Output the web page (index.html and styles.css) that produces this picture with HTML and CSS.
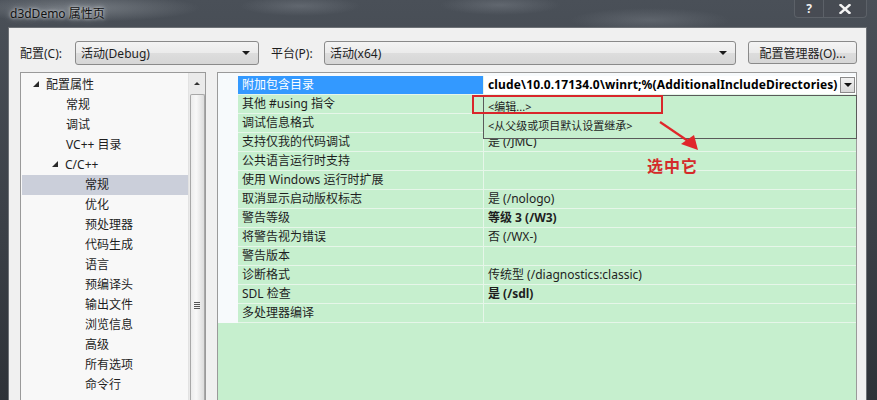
FILE: index.html
```html
<!DOCTYPE html>
<html lang="zh">
<head>
<meta charset="utf-8">
<title>d3dDemo 属性页</title>
<link rel="stylesheet" href="styles.css">
</head>
<body>
<div class="window">
  <div class="titlebar">
    <span class="title">d3dDemo 属性页</span>
    <div class="caption-btns">
      <div class="cbtn help">?</div>
      <div class="cbtn close">
        <svg width="12" height="10" viewBox="0 0 12 10"><path d="M1.5 1 L10.5 9 M10.5 1 L1.5 9" stroke="#f4f4f4" stroke-width="2.4" stroke-linecap="square"/></svg>
      </div>
    </div>
  </div>
  <div class="frame">
    <div class="dialog">
      <div class="toolbar">
        <span class="label">配置(C):</span>
        <div class="combo combo-config"><span>活动(Debug)</span><i class="arrow"></i></div>
        <span class="label label-plat">平台(P):</span>
        <div class="combo combo-plat"><span>活动(x64)</span><i class="arrow"></i></div>
        <div class="button">配置管理器(O)...</div>
      </div>
      <div class="main">
        <div class="tree">
          <div class="tree-items">
            <div class="ti l0"><i class="tri"></i>配置属性</div>
            <div class="ti l1">常规</div>
            <div class="ti l1">调试</div>
            <div class="ti l1">VC++ 目录</div>
            <div class="ti l1b"><i class="tri"></i>C/C++</div>
            <div class="ti l2 sel">常规</div>
            <div class="ti l2">优化</div>
            <div class="ti l2">预处理器</div>
            <div class="ti l2">代码生成</div>
            <div class="ti l2">语言</div>
            <div class="ti l2">预编译头</div>
            <div class="ti l2">输出文件</div>
            <div class="ti l2">浏览信息</div>
            <div class="ti l2">高级</div>
            <div class="ti l2">所有选项</div>
            <div class="ti l2">命令行</div>
          </div>
          <div class="vscroll">
            <div class="sb-up"><i></i></div>
            <div class="sb-thumb"><span class="grip"></span></div>
          </div>
        </div>
        <div class="grid">
          <div class="rows">
            <div class="row selrow"><div class="name">附加包含目录</div><div class="val edit"><span class="edit-text">clude\10.0.17134.0\winrt;%(AdditionalIncludeDirectories)</span><span class="dd"><i></i></span></div></div>
            <div class="row"><div class="name">其他 #using 指令</div><div class="val"></div></div>
            <div class="row"><div class="name">调试信息格式</div><div class="val"></div></div>
            <div class="row"><div class="name">支持仅我的代码调试</div><div class="val">是 (/JMC)</div></div>
            <div class="row"><div class="name">公共语言运行时支持</div><div class="val"></div></div>
            <div class="row"><div class="name">使用 Windows 运行时扩展</div><div class="val"></div></div>
            <div class="row"><div class="name">取消显示启动版权标志</div><div class="val">是 (/nologo)</div></div>
            <div class="row"><div class="name">警告等级</div><div class="val b">等级 3 (/W3)</div></div>
            <div class="row"><div class="name">将警告视为错误</div><div class="val">否 (/WX-)</div></div>
            <div class="row"><div class="name">警告版本</div><div class="val"></div></div>
            <div class="row"><div class="name">诊断格式</div><div class="val">传统型 (/diagnostics:classic)</div></div>
            <div class="row"><div class="name">SDL 检查</div><div class="val b">是 (/sdl)</div></div>
            <div class="row"><div class="name">多处理器编译</div><div class="val"></div></div>
          </div>
          <div class="popup">
            <div class="pi">&lt;编辑...&gt;</div>
            <div class="pi">&lt;从父级或项目默认设置继承&gt;</div>
          </div>
          <div class="redbox"></div>
          <svg class="redarrow" width="44" height="34" viewBox="0 0 44 34"><path d="M2 2 L30 21" stroke="#e0262a" stroke-width="2.2"/><path d="M23 24 L36 15 L40 30 Z" fill="#e0262a"/></svg>
          <div class="note">选中它</div>
        </div>
      </div>
    </div>
  </div>
</div>
</body>
</html>
```
FILE: styles.css
```css
html, body {
  margin: 0;
  padding: 0;
}
body {
  width: 877px;
  height: 400px;
  overflow: hidden;
  font-family: "Noto Sans", "Noto Sans CJK SC", sans-serif;
  font-size: 12px;
  color: #1e1e1e;
  background: #2c3036;
}
.window {
  width: 877px;
  height: 400px;
  display: flex;
  flex-direction: column;
  background:
    radial-gradient(ellipse 120px 14px at 80px 8px, rgba(150,156,162,0.55), transparent),
    radial-gradient(ellipse 60px 10px at 300px 6px, rgba(120,126,134,0.5), transparent),
    radial-gradient(ellipse 60px 10px at 500px 5px, rgba(120,126,134,0.5), transparent),
    radial-gradient(ellipse 80px 12px at 650px 20px, rgba(120,126,134,0.45), transparent),
    linear-gradient(180deg, #4a5058 0%, #3a3f46 60%, #2e3238 100%);
}
.titlebar {
  height: 27px;
  display: flex;
  align-items: flex-start;
  justify-content: space-between;
  flex: none;
}
.title {
  margin: 4px 0 0 10px;
  font-size: 12px;
  color: #121212;
  text-shadow: 0 0 6px rgba(220,224,228,0.9), 0 0 3px rgba(220,224,228,0.9);
}
.caption-btns {
  display: flex;
  margin-right: 10px;
  height: 17px;
  border: 1px solid #5c6168;
  border-top: none;
  border-radius: 0 0 4px 4px;
  background: rgba(70,74,80,0.6);
}
.cbtn {
  display: flex;
  align-items: center;
  justify-content: center;
  color: #f0f0f0;
  font-weight: bold;
  font-size: 12px;
}
.cbtn.help {
  width: 28px;
  border-right: 1px solid #5c6168;
}
.cbtn.close {
  width: 42px;
}
.frame {
  flex: 1;
  display: flex;
  padding: 0 10px 0 8px;
  min-height: 0;
}
.dialog {
  flex: 1;
  background: #f0f0f0;
  border: 1px solid #6d7176;
  border-bottom: none;
  display: flex;
  flex-direction: column;
  min-height: 0;
}
.toolbar {
  display: flex;
  align-items: center;
  height: 25px;
  margin-top: 12px;
  padding-left: 11px;
}
.label {
  width: 55px;
  flex: none;
}
.label-plat {
  margin-left: 12px;
  width: 53px;
}
.combo {
  height: 22px;
  border: 1px solid #8a8a8a;
  border-radius: 3px;
  background: linear-gradient(180deg, #f4f4f4 0%, #ebebeb 50%, #dddddd 51%, #d6d6d6 100%);
  display: flex;
  align-items: center;
  justify-content: space-between;
  padding: 0 8px 0 5px;
  box-sizing: border-box;
  flex: none;
}
.combo-config { width: 184px; height: 24px; }
.combo-plat { width: 412px; height: 24px; }
.arrow {
  width: 0;
  height: 0;
  border-left: 4px solid transparent;
  border-right: 4px solid transparent;
  border-top: 4px solid #1a1a1a;
}
.button {
  margin-left: 12px;
  width: 109px;
  height: 23px;
  box-sizing: border-box;
  border: 1px solid #8a8a8a;
  border-radius: 3px;
  background: linear-gradient(180deg, #f4f4f4 0%, #ebebeb 50%, #dddddd 51%, #d6d6d6 100%);
  display: flex;
  align-items: center;
  justify-content: center;
}
.main {
  flex: 1;
  display: flex;
  margin-top: 7px;
  padding-left: 11px;
  min-height: 0;
}
.tree {
  width: 186px;
  box-sizing: border-box;
  border: 1px solid #9a9a9a;
  border-bottom: none;
  background: #f8f8f8;
  display: flex;
  flex: none;
}
.tree-items {
  flex: 1;
  padding-top: 2px;
  padding-left: 1px;
}
.ti {
  height: 20px;
  line-height: 20px;
  white-space: nowrap;
  display: flex;
  align-items: center;
}
.ti.l0 { padding-left: 11px; }
.ti.l1 { padding-left: 44px; }
.ti.l1b { padding-left: 30px; }
.ti.l2 { padding-left: 63px; }
.ti.sel { background: #cbcfda; }
.tri {
  width: 0;
  height: 0;
  border-left: 6px solid transparent;
  border-bottom: 6px solid #2a2a2a;
  margin-right: 7px;
  margin-top: -2px;
}
.vscroll {
  width: 16px;
  flex: none;
  background: #eaeaea;
  border-left: 1px solid #e2e2e2;
  display: flex;
  flex-direction: column;
  align-items: center;
}
.sb-up {
  height: 17px;
  width: 15px;
  display: flex;
  align-items: center;
  justify-content: center;
  margin-top: 2px;
}
.sb-up i {
  width: 0;
  height: 0;
  border-left: 3px solid transparent;
  border-right: 3px solid transparent;
  border-bottom: 3px solid #333;
}
.sb-thumb {
  flex: 1;
  width: 13px;
  margin-top: 2px;
  border: 1px solid #a8a8a8;
  border-bottom: none;
  border-radius: 2px 2px 0 0;
  background: linear-gradient(90deg, #ececec 0%, #f8f8f8 40%, #dcdcdc 100%);
  position: relative;
}
.grip {
  position: absolute;
  left: 3px;
  top: 207px;
  width: 6px;
  height: 7px;
  background: repeating-linear-gradient(180deg, #555 0 1px, transparent 1px 2px);
}
.grid {
  margin-left: 11px;
  width: 640px;
  flex: none;
  box-sizing: border-box;
  border: 1px solid #9a9a9a;
  border-bottom: none;
  background: #c6efce;
  position: relative;
}
.rows {
  background: #f7fafc;
  padding: 3px 0 0 20px;
}
.row {
  display: flex;
  height: 19px;
  box-sizing: border-box;
  border-bottom: 1px solid #e6f6e9;
  background: #c6efce;
}
.name {
  width: 246px;
  box-sizing: border-box;
  flex: none;
  border-right: 1px solid #e6f6e9;
  padding-left: 4px;
  line-height: 18px;
  white-space: nowrap;
  overflow: hidden;
}
.val {
  flex: 1;
  padding-left: 4px;
  line-height: 18px;
  white-space: nowrap;
  overflow: hidden;
}
.val.b { font-weight: bold; }
.selrow .name {
  background: #3399ff;
  color: #ffffff;
}
.val.edit {
  background: #ffffff;
  display: flex;
  align-items: center;
  justify-content: space-between;
  padding-right: 1px;
}
.edit-text {
  font-weight: bold;
  color: #000;
  letter-spacing: 0.15px;
  overflow: hidden;
}
.dd {
  width: 15px;
  height: 16px;
  flex: none;
  box-sizing: border-box;
  border: 1px solid #8a8a8a;
  background: linear-gradient(180deg, #f2f2f2, #d8d8d8);
  display: flex;
  align-items: center;
  justify-content: center;
}
.dd i {
  width: 0;
  height: 0;
  border-left: 4px solid transparent;
  border-right: 4px solid transparent;
  border-top: 4px solid #111;
}
.popup {
  position: absolute;
  left: 265px;
  top: 22px;
  width: 374px;
  height: 44px;
  box-sizing: border-box;
  border: 1px solid #5a5a5a;
  background: #c6efce;
  padding-top: 1px;
  font-size: 11px;
}
.pi {
  height: 19px;
  line-height: 19px;
  padding-left: 4px;
}
.redbox {
  position: absolute;
  left: 254px;
  top: 22px;
  width: 191px;
  height: 19px;
  box-sizing: border-box;
  border: 2px solid #d9262b;
}
.redarrow {
  position: absolute;
  left: 440px;
  top: 47px;
}
.note {
  position: absolute;
  left: 429px;
  top: 80px;
  font-size: 16px;
  font-weight: bold;
  color: #d42a2a;
  font-family: "Noto Sans CJK SC", sans-serif;
  letter-spacing: 1px;
}
```
